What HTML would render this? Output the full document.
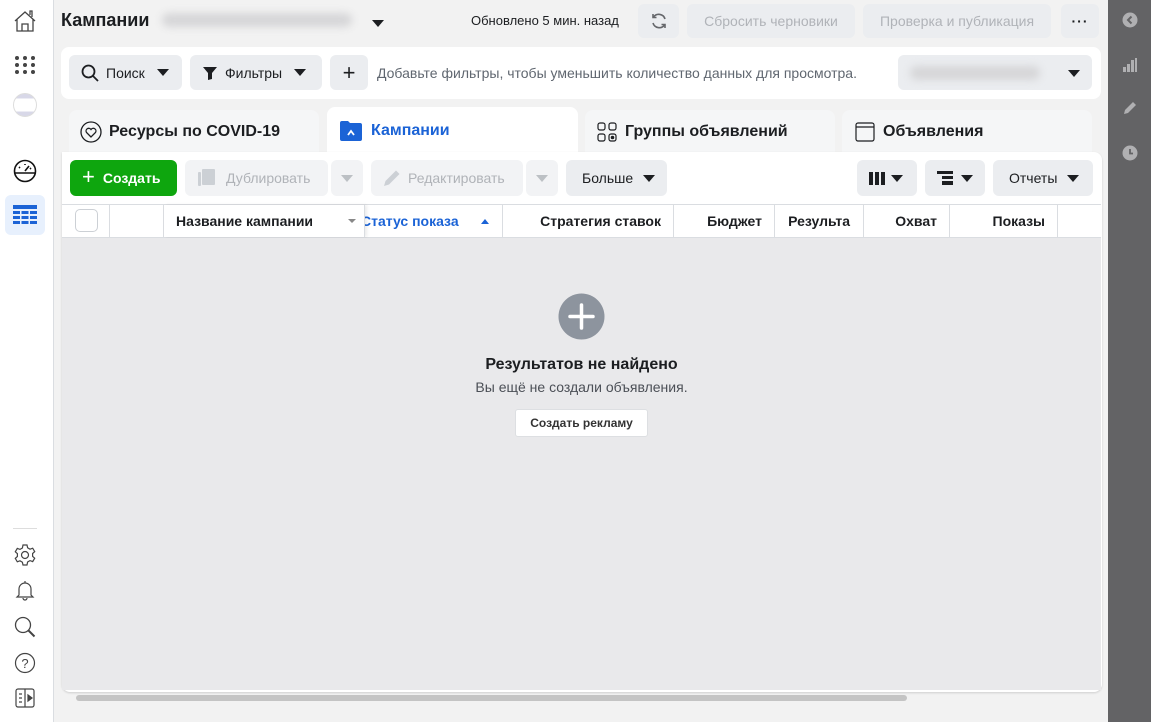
<!DOCTYPE html>
<html><head><meta charset="utf-8"><style>
*{box-sizing:border-box;margin:0;padding:0}
body{width:1151px;height:722px;overflow:hidden;background:#f2f2f2;font-family:"Liberation Sans",Arial,sans-serif;color:#1c1e21;position:relative}
.abs{position:absolute}
.side{left:0;top:0;width:54px;height:722px;background:#fff;border-right:1px solid #dadde1}
.rbar{left:1108px;top:0;width:43px;height:722px;background:#636365}
.btn{position:absolute;background:#ebedf0;border-radius:6px;display:flex;align-items:center;font-size:14px;color:#1c1e21}
.dis{color:#b0b3b8}
.car{display:inline-block;width:0;height:0;border-left:6px solid transparent;border-right:6px solid transparent;border-top:7px solid #1c1e21}
.card{background:#fff;border-radius:8px}
.tab{position:absolute;top:110px;height:44px;background:#f5f6f7;border-radius:8px 8px 0 0;font-size:16px;font-weight:bold;display:flex;align-items:center}
.th{position:absolute;top:205px;height:32px;border-right:1px solid #dadde1;font-size:14px;font-weight:bold;display:flex;align-items:center;justify-content:flex-end;padding-right:12px}
.blur{background:#d6d6d8;filter:blur(4px);height:14px;border-radius:7px;position:absolute}
</style></head><body>
<div class="abs side">
<svg class="abs" style="left:12px;top:8px" width="26" height="26" viewBox="0 0 26 26" fill="none" stroke="#444" stroke-width="1.3"><path d="M3 13L13 4l10 9M5 11v12h16V11M10 23v-7h6v7M18 7V3h2v6"/></svg>
<svg class="abs" style="left:15px;top:56px" width="20" height="20"><g fill="#444"><circle cx="2" cy="2" r="2"/><circle cx="10" cy="2" r="2"/><circle cx="18" cy="2" r="2"/><circle cx="2" cy="9" r="2"/><circle cx="10" cy="9" r="2"/><circle cx="18" cy="9" r="2"/><circle cx="2" cy="16" r="2"/><circle cx="10" cy="16" r="2"/><circle cx="18" cy="16" r="2"/></g></svg>
<div class="abs" style="left:13px;top:93px;width:24px;height:24px;border-radius:50%;border:1px solid #ddd;background:linear-gradient(#d8d8e8 0 20%,#fff 20% 80%,#d8d8e8 80%)"></div>
<svg class="abs" style="left:13px;top:159px" width="24" height="24" fill="none" stroke="#111" stroke-width="1.6"><circle cx="12" cy="12" r="10.5"/><path d="M2 14h20M12 12l4-5M6 8l1 1M12 5v1M18 9l-1 1"/></svg>
<div class="abs" style="left:5px;top:195px;width:40px;height:40px;background:#e7f0fd;border-radius:6px"></div>
<svg class="abs" style="left:13px;top:205px" width="24" height="20"><g fill="#1b63d6"><rect width="24" height="4"/><rect y="6" width="7" height="3"/><rect x="8.5" y="6" width="7" height="3"/><rect x="17" y="6" width="7" height="3"/><rect y="11" width="7" height="3"/><rect x="8.5" y="11" width="7" height="3"/><rect x="17" y="11" width="7" height="3"/><rect y="16" width="7" height="3"/><rect x="8.5" y="16" width="7" height="3"/><rect x="17" y="16" width="7" height="3"/></g></svg>
<div class="abs" style="left:13px;top:528px;width:24px;height:1px;background:#ddd"></div>
<svg class="abs" style="left:14px;top:544px" width="22" height="22" fill="none" stroke="#444" stroke-width="1.2"><circle cx="11" cy="11" r="3.5"/><path d="M9 1h4l.6 2.8 2.4 1.4 2.7-1 2 3.4-2.1 1.9v2.8l2.1 1.9-2 3.4-2.7-1-2.4 1.4L13 21H9l-.6-2.8-2.4-1.4-2.7 1-2-3.4 2.1-1.9V9.7L1.3 7.8l2-3.4 2.7 1 2.4-1.4z"/></svg>
<svg class="abs" style="left:15px;top:580px" width="20" height="22" fill="none" stroke="#444" stroke-width="1.2"><path d="M10 1v2M4 15V9a6 6 0 0112 0v6l2 2H2zM8 18a2 2 0 004 0"/></svg>
<svg class="abs" style="left:14px;top:616px" width="22" height="22" fill="none" stroke="#444" stroke-width="1.3"><circle cx="9" cy="9" r="7.5"/><path d="M14.5 14.5l6 6" stroke-width="2"/></svg>
<svg class="abs" style="left:14px;top:652px" width="22" height="22" fill="none" stroke="#444" stroke-width="1.2"><circle cx="11" cy="11" r="9.5"/><text x="11" y="16" font-size="13" text-anchor="middle" fill="#444" stroke="none" font-family="Liberation Sans">?</text></svg>
<svg class="abs" style="left:15px;top:688px" width="20" height="20" fill="none" stroke="#444" stroke-width="1.2"><rect x="1" y="1" width="18" height="18" rx="2"/><path d="M10 1v18M4 6h3M4 10h3M4 14h3"/><path d="M13 7l4 3-4 3z" fill="#444"/></svg>
</div>

<div class="abs rbar">
<svg class="abs" style="left:14px;top:12px" width="16" height="16"><circle cx="8" cy="8" r="7.5" fill="#b0b0b2"/><path d="M9.5 4.5L6 8l3.5 3.5" stroke="#636365" stroke-width="2" fill="none"/></svg>
<svg class="abs" style="left:14px;top:58px" width="16" height="14" fill="#b0b0b2"><rect x="1" y="9" width="3" height="5"/><rect x="5" y="6" width="3" height="8"/><rect x="9" y="2" width="3" height="12"/><rect x="13" y="0" width="2" height="14"/></svg>
<svg class="abs" style="left:14px;top:100px" width="16" height="16" fill="#b0b0b2"><path d="M2 14l1-4 8-8 3 3-8 8z"/></svg>
<svg class="abs" style="left:14px;top:145px" width="16" height="16"><circle cx="8" cy="8" r="7.5" fill="#b0b0b2"/><path d="M8 4v4.5h3" stroke="#636365" stroke-width="1.8" fill="none"/></svg>
</div>

<div class="abs" style="left:61px;top:10px;font-size:18px;font-weight:bold">Кампании</div>
<div class="blur" style="left:162px;top:13px;width:190px"></div>
<div class="abs" style="left:372px;top:14px"><span class="car"></span></div>
<div class="abs" style="left:471px;top:13px;font-size:13px">Обновлено 5 мин. назад</div>
<div class="btn" style="left:638px;top:4px;width:41px;height:34px;justify-content:center"><svg width="18" height="18" fill="none" stroke="#65676b" stroke-width="1.6"><path d="M15 7A6.5 6.5 0 003.5 5M3 11a6.5 6.5 0 0011.5 2"/><path d="M3 2v3.5h3.5M15 16v-3.5h-3.5"/></svg></div>
<div class="btn dis" style="left:687px;top:4px;width:168px;height:34px;justify-content:center">Сбросить черновики</div>
<div class="btn dis" style="left:863px;top:4px;width:188px;height:34px;justify-content:center">Проверка и публикация</div>
<div class="btn" style="left:1061px;top:4px;width:38px;height:34px;justify-content:center;font-weight:bold;letter-spacing:1px">···</div>

<div class="abs card" style="left:61px;top:47px;width:1040px;height:52px"></div>
<div class="btn" style="left:69px;top:55px;width:113px;height:35px;padding-left:12px"><svg width="18" height="18" fill="none" stroke="#1c1e21" stroke-width="1.8"><circle cx="7.5" cy="7.5" r="6"/><path d="M12 12l5 5"/></svg><span style="margin:0 12px 0 7px">Поиск</span><span class="car"></span></div>
<div class="btn" style="left:190px;top:55px;width:132px;height:35px;padding-left:13px"><svg width="14" height="14" fill="#1c1e21"><path d="M0 1h14L9 7v6l-4 1V7z"/></svg><span style="margin:0 12px 0 8px">Фильтры</span><span class="car"></span></div>
<div class="btn" style="left:330px;top:55px;width:38px;height:35px;justify-content:center;font-size:22px;font-weight:300">+</div>
<div class="abs" style="left:377px;top:65px;font-size:14px;color:#606770">Добавьте фильтры, чтобы уменьшить количество данных для просмотра.</div>
<div class="btn" style="left:898px;top:55px;width:194px;height:35px"><div class="blur" style="left:12px;top:11px;width:130px"></div><span class="car" style="position:absolute;left:170px;top:15px"></span></div>

<div class="tab" style="left:69px;width:250px;padding-left:11px"><svg width="22" height="22" fill="none" stroke="#1c1e21" stroke-width="1.3"><circle cx="11" cy="11" r="10"/><path d="M11 16l-4.5-4.5a2.6 2.6 0 014.5-3 2.6 2.6 0 014.5 3z"/></svg><span style="margin-left:7px">Ресурсы по COVID-19</span></div>
<div class="tab" style="left:327px;top:107px;height:47px;width:251px;background:#fff;padding-left:13px;color:#1b63d6"><svg width="22" height="20"><path d="M0 2a2 2 0 012-2h6l2 2h10a2 2 0 012 2v14a2 2 0 01-2 2H2a2 2 0 01-2-2z" fill="#1b63d6"/><path d="M8 14l3-4 3 4" stroke="#fff" stroke-width="1.8" fill="none"/></svg><span style="margin-left:9px">Кампании</span></div>
<div class="tab" style="left:585px;width:250px;padding-left:12px"><svg width="20" height="20" fill="none" stroke="#1c1e21" stroke-width="1.2"><rect x="1" y="1" width="7" height="7" rx="2"/><rect x="12" y="1" width="7" height="7" rx="2"/><rect x="1" y="12" width="7" height="7" rx="2"/><rect x="12" y="12" width="7" height="7" rx="2"/><circle cx="15.5" cy="15.5" r="1.2" fill="#1c1e21"/></svg><span style="margin-left:8px">Группы объявлений</span></div>
<div class="tab" style="left:842px;width:250px;padding-left:13px"><svg width="20" height="20" fill="none" stroke="#1c1e21" stroke-width="1.2"><rect x="1" y="1" width="18" height="18" rx="2"/><path d="M1 5h18"/></svg><span style="margin-left:8px">Объявления</span></div>

<div class="abs" style="left:62px;top:152px;width:1040px;height:540px;background:#fff;border-radius:0 8px 8px 8px;box-shadow:0 1px 2px rgba(0,0,0,.15)"></div>
<div class="btn" style="left:70px;top:160px;width:107px;height:36px;background:#0ea60e;color:#fff;font-weight:bold;padding-left:12px"><span style="font-size:22px;font-weight:300;margin-right:8px;margin-top:-3px">+</span>Создать</div>
<div class="btn dis" style="left:185px;top:160px;width:143px;height:36px;padding-left:12px;background:#f2f3f5"><svg width="20" height="18" fill="#ccd0d5"><rect x="5" y="0" width="13" height="16" rx="1"/><rect x="1" y="3" width="3" height="14" rx="1"/></svg><span style="margin-left:9px">Дублировать</span></div>
<div class="btn" style="left:331px;top:160px;width:32px;height:36px;justify-content:center;background:#f2f3f5"><span class="car" style="border-top-color:#bcc0c4"></span></div>
<div class="btn dis" style="left:371px;top:160px;width:152px;height:36px;padding-left:12px;background:#f2f3f5"><svg width="18" height="18" fill="#ccd0d5"><path d="M1 17l1.5-5L13 1.5l3.5 3.5L6 15.5z"/></svg><span style="margin-left:7px">Редактировать</span></div>
<div class="btn" style="left:526px;top:160px;width:32px;height:36px;justify-content:center;background:#f2f3f5"><span class="car" style="border-top-color:#bcc0c4"></span></div>
<div class="btn" style="left:566px;top:160px;width:101px;height:36px;padding-left:16px"><span style="margin-right:10px">Больше</span><span class="car"></span></div>
<div class="btn" style="left:857px;top:160px;width:60px;height:36px;padding-left:12px"><svg width="16" height="13" fill="#1c1e21"><rect width="4" height="13"/><rect x="6" width="4" height="13"/><rect x="12" width="4" height="13"/></svg><span class="car" style="margin-left:6px"></span></div>
<div class="btn" style="left:925px;top:160px;width:60px;height:36px;padding-left:12px"><svg width="16" height="14" fill="#1c1e21"><rect width="16" height="3"/><rect x="5" y="5" width="11" height="3"/><rect x="5" y="10" width="11" height="4"/></svg><span class="car" style="margin-left:8px"></span></div>
<div class="btn" style="left:993px;top:160px;width:100px;height:36px;padding-left:16px"><span style="margin-right:10px">Отчеты</span><span class="car"></span></div>

<div class="abs" style="left:62px;top:204px;width:1039px;height:1px;background:#dadde1"></div>
<div class="abs" style="left:62px;top:237px;width:1039px;height:1px;background:#dadde1"></div>
<div class="abs" style="left:75px;top:209px;width:23px;height:23px;border:1px solid #ccd0d5;border-radius:5px;background:#fff"></div>
<div class="th" style="left:62px;width:48px;padding:0"></div>
<div class="th" style="left:110px;width:54px;padding:0"></div>
<div class="th" style="left:503px;width:171px">Стратегия ставок</div>
<div class="th" style="left:365px;width:138px;justify-content:space-between;padding-left:0;color:#1b63d6;overflow:hidden"><span style="margin-left:-4px">Статус показа</span><span style="border-left:4px solid transparent;border-right:4px solid transparent;border-bottom:5px solid #1b63d6;margin-right:1px"></span></div>
<div class="th" style="left:164px;width:201px;justify-content:space-between;padding-left:12px;background:#fff;box-shadow:2px 0 3px rgba(0,0,0,.08)">Название кампании<span class="car" style="border-width:4px 4px 0;border-top-color:#888;margin-right:-4px"></span></div>
<div class="th" style="left:674px;width:101px">Бюджет</div>
<div class="th" style="left:775px;width:89px;padding-right:13px">Результа</div>
<div class="th" style="left:864px;width:86px">Охват</div>
<div class="th" style="left:950px;width:108px">Показы</div>

<div class="abs" style="left:62px;top:238px;width:1039px;height:452px;background:#e9e9eb"></div>
<div class="abs" style="left:76px;top:695px;width:831px;height:6px;background:#c4c4c4;border-radius:3px"></div>
<svg class="abs" style="left:558px;top:293px" width="47" height="47"><circle cx="23.5" cy="23.5" r="23" fill="#8d949e"/><path d="M23.5 12v23M12 23.5h23" stroke="#fff" stroke-width="3.5" stroke-linecap="round"/></svg>
<div class="abs" style="left:62px;top:356px;width:1039px;text-align:center;font-size:16px;font-weight:bold">Результатов не найдено</div>
<div class="abs" style="left:62px;top:379px;width:1039px;text-align:center;font-size:14px;color:#4b4f56">Вы ещё не создали объявления.</div>
<div class="abs" style="left:515px;top:409px;width:133px;height:28px;background:#fff;border:1px solid #dddfe2;border-radius:3px;font-size:12px;font-weight:bold;display:flex;align-items:center;justify-content:center;color:#333">Создать рекламу</div>
</body></html>
